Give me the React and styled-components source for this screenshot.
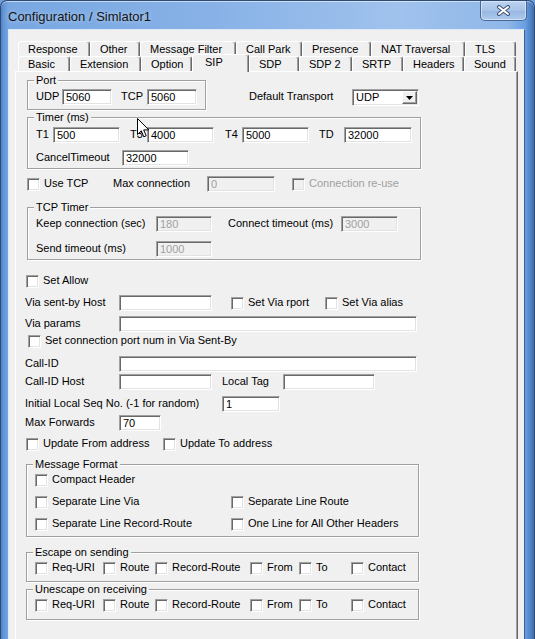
import React from 'react';
import styled, { createGlobalStyle } from 'styled-components';

const FONT = `"Liberation Sans", Arial, sans-serif`;

const GlobalStyle = createGlobalStyle`
  html, body { margin: 0; padding: 0; }
  body {
    background: #6f9fdc;
    font-family: ${FONT};
    font-size: 11px;
    color: #000;
  }
  *, *::before, *::after { box-sizing: border-box; }
`;

const Window = styled.div`
  position: relative;
  width: 535px;
  height: 639px;
  display: flex;
  flex-direction: column;
  border: 1px solid #2e4b74;
  border-bottom: 0;
  border-radius: 7px 7px 0 0;
  overflow: hidden;
  background: linear-gradient(
    to right,
    #4f83c8 0,
    #6698da 3px,
    #78a7e2 8px,
    #88b2e7 40%,
    #a0c2ed 75%,
    #8fb7e8 95%,
    #6aa0e2 98.3%,
    #3f6fb0 100%
  );
  box-shadow: inset 0 1px 0 rgba(255, 255, 255, 0.55);
`;

const TitleBar = styled.div`
  flex: none;
  height: 28px;
  display: flex;
  align-items: flex-start;
  padding-left: 7px;
`;

const Title = styled.div`
  margin-top: 8px;
  font-size: 13px;
  line-height: 15px;
  color: #141414;
  text-shadow: 0 0 5px rgba(255, 255, 255, 0.55);
  white-space: nowrap;
`;

const CloseBtn = styled.div`
  margin-left: auto;
  margin-right: 7px;
  width: 47px;
  height: 20px;
  display: flex;
  align-items: center;
  justify-content: center;
  border: 1px solid #4a6897;
  border-top: 0;
  border-radius: 0 0 5px 5px;
  background: linear-gradient(#bcd3f0, #a7c3e8 50%, #97b7e0 52%, #aecbee);
  box-shadow: inset 0 0 0 1px rgba(255, 255, 255, 0.45);
`;

const Client = styled.div`
  flex: 1;
  min-height: 0;
  margin: 0 9px 0 7px;
  display: flex;
  flex-direction: column;
  background: #f0f0f0;
  border: 1px solid #dfe8f5;
  border-right-color: #3d5f8f;
  border-bottom: 0;
  padding: 11px 6px 0;
`;

const Tabs = styled.div`
  flex: 1;
  display: flex;
  flex-direction: column;
`;

const TabRow = styled.div`
  flex: none;
  height: 15px;
  display: flex;
  padding-left: 3px;
`;

const Tab = styled.div`
  flex: none;
  position: relative;
  z-index: ${p => (p.$sel ? 2 : 1)};
  width: ${p => p.$w}px;
  height: ${p => (p.$sel ? 'calc(100% + 3px)' : '100%')};
  margin-top: ${p => (p.$sel ? -2 : 0)}px;
  display: flex;
  align-items: ${p => (p.$sel ? 'flex-start' : 'center')};
  padding-left: ${p => (p.$sel ? 12 : 9)}px;
  padding-top: ${p => (p.$sel ? 1 : 0)}px;
  background: #f0f0f0;
  border-top: 1px solid #fff;
  border-left: 1px solid #fff;
  border-right: 1px solid #696969;
  box-shadow: inset -1px 0 0 #a0a0a0;
  border-radius: 3px 3px 0 0;
  line-height: 13px;
  white-space: nowrap;
`;

const Panel = styled.div`
  flex: 1;
  background: #f0f0f0;
  border-top: 1px solid #fff;
  border-left: 1px solid #fff;
  border-right: 1px solid #696969;
  box-shadow: inset -1px 0 0 #a0a0a0;
`;

const Row = styled.div`
  display: flex;
  align-items: center;
  height: ${p => p.$h ?? 16}px;
  margin-top: ${p => p.$mt ?? 0}px;
  padding-left: ${p => p.$pl ?? 0}px;
`;

const TopRow = styled.div`
  display: flex;
  align-items: flex-start;
  margin-top: 2px;
  padding-left: 11px;
`;

const Text = styled.span`
  flex: none;
  width: ${p => (p.$w ? `${p.$w}px` : 'auto')};
  margin-left: ${p => p.$ml ?? 0}px;
  margin-bottom: 2px;
  color: ${p => (p.$dim ? '#a0a0a0' : '#000')};
  line-height: 13px;
  white-space: nowrap;
`;

const Edit = styled.input.attrs({ type: 'text', readOnly: true, tabIndex: -1 })`
  flex: none;
  width: ${p => p.$w}px;
  height: 16px;
  margin: 0 0 0 ${p => p.$ml ?? 0}px;
  padding: 0 0 0 3px;
  font: 11px ${FONT};
  color: ${p => (p.$dim ? '#a0a0a0' : '#000')};
  background: ${p => (p.$dim ? '#f0f0f0' : '#fff')};
  border: 1px solid;
  border-color: #a0a0a0 #fff #fff #a0a0a0;
  box-shadow: inset 1px 1px 0 #696969, inset -1px -1px 0 #e3e3e3;
  border-radius: 0;
  outline: none;
`;

const CheckWrap = styled.label`
  flex: none;
  display: flex;
  align-items: center;
  gap: 4px;
  width: ${p => (p.$w ? `${p.$w}px` : 'auto')};
  margin-left: ${p => p.$ml ?? 0}px;
  color: ${p => (p.$dim ? '#a0a0a0' : '#000')};
  line-height: 13px;
  white-space: nowrap;
`;

const CheckText = styled.span`
  margin-bottom: 2px;
`;

const Box = styled.span`
  flex: none;
  width: 13px;
  height: 13px;
  background: ${p => (p.$dim ? '#f0f0f0' : '#fff')};
  border: 1px solid;
  border-color: #a0a0a0 #fff #fff #a0a0a0;
  box-shadow: inset 1px 1px 0 #696969, inset -1px -1px 0 #e3e3e3;
`;

const Group = styled.fieldset`
  flex: none;
  width: ${p => p.$w}px;
  margin: ${p => p.$mt ?? 0}px 0 0 ${p => p.$ml ?? 0}px;
  padding: ${p => p.$pt ?? 0}px 0 ${p => p.$pb ?? 0}px ${p => p.$pl ?? 8}px;
  border: 1px solid #a0a0a0;
  box-shadow: inset 1px 1px 0 #fff, 1px 1px 0 #fff;
  min-width: 0;
`;

const Legend = styled.legend`
  padding: 0 2px;
  margin-left: -2px;
  line-height: 13px;
  background: #f0f0f0;
  white-space: nowrap;
`;

const DTBlock = styled.div`
  display: flex;
  align-items: center;
  padding-top: 15px;
  margin-left: 43px;
`;

const Select = styled.div`
  flex: none;
  width: 67px;
  height: 17px;
  display: flex;
  align-items: center;
  padding: 1px 1px 1px 3px;
  background: #fff;
  border: 1px solid;
  border-color: #a0a0a0 #fff #fff #a0a0a0;
  box-shadow: inset 1px 1px 0 #696969, inset -1px -1px 0 #e3e3e3;
`;

const SelText = styled.span`
  flex: 1;
  line-height: 13px;
`;

const DropBtn = styled.span`
  flex: none;
  width: 15px;
  height: 13px;
  display: flex;
  align-items: center;
  justify-content: center;
  background: #f0f0f0;
  border: 1px solid;
  border-color: #fff #696969 #696969 #fff;
  box-shadow: inset -1px -1px 0 #a0a0a0;
`;

const Cursor = styled.svg`
  position: absolute;
  left: 136px;
  top: 117px;
  z-index: 10;
`;

const Check = ({ w, ml, dim, children }) => (
  <CheckWrap $w={w} $ml={ml} $dim={dim}>
    <Box $dim={dim} />
    <CheckText>{children}</CheckText>
  </CheckWrap>
);

const row1 = [
  ['Response', 72],
  ['Other', 50],
  ['Message Filter', 96],
  ['Call Park', 66],
  ['Presence', 69],
  ['NAT Traversal', 94],
  ['TLS', 51],
];

const row2 = [
  ['Basic', 52],
  ['Extension', 71],
  ['Option', 51],
  ['SIP', 57, true],
  ['SDP', 50],
  ['SDP 2', 53],
  ['SRTP', 51],
  ['Headers', 61],
  ['Sound', 52],
];

const escapeItems = [
  ['Req-URI', 68],
  ['Route', 52],
  ['Record-Route', 95],
  ['From', 49],
  ['To', 52],
  ['Contact'],
];

const EscapeRow = () => (
  <Row $mt={1}>
    {escapeItems.map(([t, w]) => (
      <Check key={t} w={w}>
        {t}
      </Check>
    ))}
  </Row>
);

export default function App() {
  return (
    <>
      <GlobalStyle />
      <Window>
        <TitleBar>
          <Title>Configuration / Simlator1</Title>
          <CloseBtn>
            <svg width="15" height="11" viewBox="0 0 15 11">
              <path d="M3 2 L12 9 M12 2 L3 9" stroke="#3e5272" strokeWidth="4" strokeLinecap="round" />
              <path d="M3 2 L12 9 M12 2 L3 9" stroke="#ffffff" strokeWidth="2" strokeLinecap="round" />
            </svg>
          </CloseBtn>
        </TitleBar>
        <Client>
          <Tabs>
            <TabRow>
              {row1.map(([t, w]) => (
                <Tab key={t} $w={w}>
                  {t}
                </Tab>
              ))}
            </TabRow>
            <TabRow>
              {row2.map(([t, w, sel]) => (
                <Tab key={t} $w={w} $sel={sel}>
                  {t}
                </Tab>
              ))}
            </TabRow>
            <Panel>
              <TopRow>
                <Group $w={179} $pt={2} $pb={4}>
                  <Legend>Port</Legend>
                  <Row>
                    <Text $w={26}>UDP</Text>
                    <Edit $w={50} defaultValue="5060" />
                    <Text $w={26} $ml={9}>TCP</Text>
                    <Edit $w={50} defaultValue="5060" />
                  </Row>
                </Group>
                <DTBlock>
                  <Text $w={103}>Default Transport</Text>
                  <Select>
                    <SelText>UDP</SelText>
                    <DropBtn>
                      <svg width="7" height="4" viewBox="0 0 7 4">
                        <polygon points="0,0 7,0 3.5,4" fill="#000" />
                      </svg>
                    </DropBtn>
                  </Select>
                </DTBlock>
              </TopRow>

              <Group $w={394} $ml={11} $mt={1} $pt={3} $pb={2}>
                <Legend>Timer (ms)</Legend>
                <Row>
                  <Text $w={17}>T1</Text>
                  <Edit $w={67} defaultValue="500" />
                  <Text $w={17} $ml={10}>T3</Text>
                  <Edit $w={67} defaultValue="4000" />
                  <Text $w={17} $ml={11}>T4</Text>
                  <Edit $w={67} defaultValue="5000" />
                  <Text $w={25} $ml={10}>TD</Text>
                  <Edit $w={68} defaultValue="32000" />
                </Row>
                <Row $mt={7}>
                  <Text $w={86}>CancelTimeout</Text>
                  <Edit $w={67} defaultValue="32000" />
                </Row>
              </Group>

              <Row $mt={7} $pl={11}>
                <Check w={86}>Use TCP</Check>
                <Text $w={94}>Max connection</Text>
                <Edit $w={68} $dim defaultValue="0" />
                <Check ml={17} dim>
                  Connection re-use
                </Check>
              </Row>

              <Group $w={394} $ml={11} $mt={9} $pt={2} $pb={2}>
                <Legend>TCP Timer</Legend>
                <Row>
                  <Text $w={120}>Keep connection (sec)</Text>
                  <Edit $w={56} $dim defaultValue="180" />
                  <Text $w={113} $ml={16}>Connect timeout (ms)</Text>
                  <Edit $w={57} $dim defaultValue="3000" />
                </Row>
                <Row $mt={9}>
                  <Text $w={120}>Send timeout (ms)</Text>
                  <Edit $w={56} $dim defaultValue="1000" />
                </Row>
              </Group>

              <Row $mt={13} $pl={10}>
                <Check>Set Allow</Check>
              </Row>
              <Row $mt={6} $pl={9}>
                <Text $w={94}>Via sent-by Host</Text>
                <Edit $w={93} defaultValue="" />
                <Check w={94} ml={19}>
                  Set Via rport
                </Check>
                <Check>Set Via alias</Check>
              </Row>
              <Row $mt={5} $pl={9}>
                <Text $w={94}>Via params</Text>
                <Edit $w={298} defaultValue="" />
              </Row>
              <Row $mt={1} $pl={12}>
                <Check>Set connection port num in Via Sent-By</Check>
              </Row>
              <Row $mt={7} $pl={9}>
                <Text $w={94}>Call-ID</Text>
                <Edit $w={298} defaultValue="" />
              </Row>
              <Row $mt={2} $pl={9}>
                <Text $w={94}>Call-ID Host</Text>
                <Edit $w={93} defaultValue="" />
                <Text $w={61} $ml={10}>Local Tag</Text>
                <Edit $w={92} defaultValue="" />
              </Row>
              <Row $mt={6} $pl={9}>
                <Text $w={197}>Initial Local Seq No. (-1 for random)</Text>
                <Edit $w={58} defaultValue="1" />
              </Row>
              <Row $mt={3} $pl={9}>
                <Text $w={94}>Max Forwards</Text>
                <Edit $w={42} defaultValue="70" />
              </Row>
              <Row $mt={5} $pl={10}>
                <Check w={137}>Update From address</Check>
                <Check>Update To address</Check>
              </Row>

              <Group $w={393} $ml={10} $mt={6} $pt={1} $pb={4}>
                <Legend>Message Format</Legend>
                <Row>
                  <Check>Compact Header</Check>
                </Row>
                <Row $mt={6}>
                  <Check w={196}>Separate Line Via</Check>
                  <Check>Separate Line Route</Check>
                </Row>
                <Row $mt={6}>
                  <Check w={196}>Separate Line Record-Route</Check>
                  <Check>One Line for All Other Headers</Check>
                </Row>
              </Group>

              <Group $w={393} $ml={10} $mt={9} $pt={0} $pb={5}>
                <Legend>Escape on sending</Legend>
                <EscapeRow />
              </Group>

              <Group $w={393} $ml={10} $mt={1} $pt={0} $pb={6}>
                <Legend>Unescape on receiving</Legend>
                <EscapeRow />
              </Group>
            </Panel>
          </Tabs>
        </Client>
        <Cursor width="13" height="21" viewBox="0 0 13 21">
          <path
            d="M0.5 0.5 L0.5 16.5 L4.3 12.8 L6.8 18.8 L9.2 17.8 L6.7 11.9 L11.8 11.9 Z"
            fill="#fff"
            stroke="#000"
            strokeWidth="1"
            strokeLinejoin="miter"
          />
        </Cursor>
      </Window>
    </>
  );
}
